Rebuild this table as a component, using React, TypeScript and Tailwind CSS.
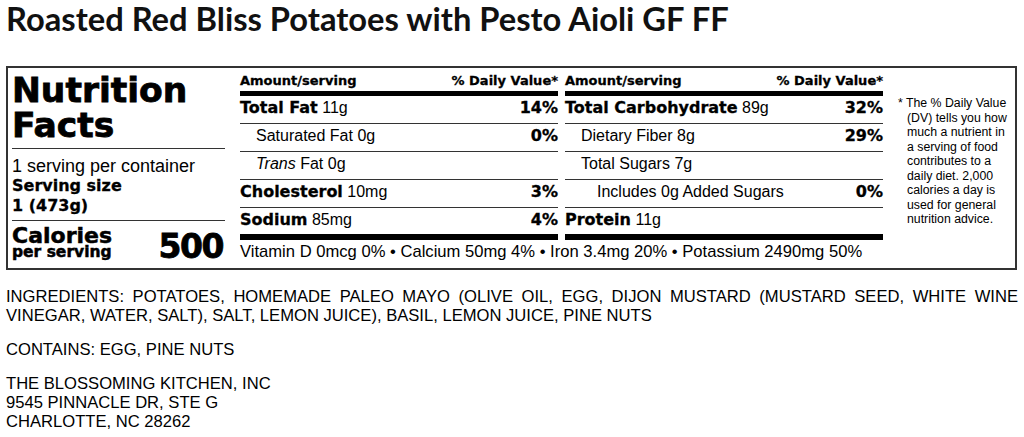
import React from "react";

const heavy = "font-['DejaVu_Sans',sans-serif] font-bold [-webkit-text-stroke:0.3px_black]";
const reg = "font-['Liberation_Sans',Arial,sans-serif]";

type RowProps = {
  children: React.ReactNode;
  dv?: string;
  indent?: 0 | 1 | 2;
  last?: boolean;
};

function Row({ children, dv, indent = 0, last = false }: RowProps) {
  const base = last
    ? "flex justify-between items-start h-[26px]"
    : "flex justify-between items-start h-[28px] border-b border-[#333]";
  const pad = indent === 2 ? "pl-[32px]" : indent === 1 ? "pl-[16px]" : "pl-0";
  return (
    <div className={base}>
      <div className={`${pad} text-[16px] leading-[24px] whitespace-nowrap`}>{children}</div>
      {dv ? <div className={`${heavy} text-[16px] leading-[24px]`}>{dv}</div> : null}
    </div>
  );
}

function B({ children }: { children: React.ReactNode }) {
  return <span className={heavy}>{children}</span>;
}

function Header() {
  return (
    <>
      <div className={`${heavy} flex justify-between text-[13px] leading-[16px]`}>
        <span>Amount/serving</span>
        <span>% Daily Value*</span>
      </div>
      <div className="mt-[2px] h-[5px] bg-black" />
    </>
  );
}

export default function App() {
  return (
    <div className={`${reg} w-[1024px] h-[437px] overflow-hidden bg-white text-black px-[6px]`}>
      <h1 className="font-['Lato',sans-serif] font-bold text-[32.7px] leading-[38px] text-[#111] whitespace-nowrap">
        Roasted Red Bliss Potatoes with Pesto Aioli GF FF
      </h1>

      <div className="mt-[28px] w-[1011px] h-[204px] border-2 border-[#333] flex pl-[4px]">
        {/* Left column */}
        <div className="w-[213px] flex flex-col pt-[5px]">
          <div className="font-['DejaVu_Sans',sans-serif] font-bold [-webkit-text-stroke:0.8px_black] text-[34.5px] leading-[35px]">
            Nutrition
            <br />
            Facts
          </div>
          <div className="mt-[5px] h-px bg-[#333]" />
          <div className="mt-[7px] leading-[20px]">
            <div className="text-[18px]">1 serving per container</div>
            <div className={`${heavy} text-[16px]`}>Serving size</div>
            <div className={`${heavy} text-[16px]`}>1 (473g)</div>
          </div>
          <div className="mt-[4px] h-px bg-[#333]" />
          <div className="flex justify-between items-start pt-[6px] pr-[2px]">
            <div className="font-['DejaVu_Sans',sans-serif] font-bold [-webkit-text-stroke:0.5px_black]">
              <div className="text-[22px] leading-[18px]">Calories</div>
              <div className="text-[15.5px] leading-[14px]">per serving</div>
            </div>
            <div className="font-['DejaVu_Sans',sans-serif] font-bold [-webkit-text-stroke:0.8px_black] mt-[5px] text-[33px] leading-[30px] tracking-[-1.5px]">
              500
            </div>
          </div>
        </div>

        {/* Middle section */}
        <div className="ml-[15px] w-[643px] flex flex-col pt-[5px]">
          <div className="flex gap-[7px]">
            <div className="w-[318px]">
              <Header />
              <Row dv="14%">
                <B>Total Fat</B> 11g
              </Row>
              <Row dv="0%" indent={1}>
                Saturated Fat 0g
              </Row>
              <Row indent={1}>
                <i>Trans</i> Fat 0g
              </Row>
              <Row dv="3%">
                <B>Cholesterol</B> 10mg
              </Row>
              <Row dv="4%" last>
                <B>Sodium</B> 85mg
              </Row>
              <div className="h-[6px] bg-black" />
            </div>
            <div className="w-[318px]">
              <Header />
              <Row dv="32%">
                <B>Total Carbohydrate</B> 89g
              </Row>
              <Row dv="29%" indent={1}>
                Dietary Fiber 8g
              </Row>
              <Row indent={1}>Total Sugars 7g</Row>
              <Row dv="0%" indent={2}>
                Includes 0g Added Sugars
              </Row>
              <Row last>
                <B>Protein</B> 11g
              </Row>
              <div className="h-[6px] bg-black" />
            </div>
          </div>
          <div className="mt-[2px] text-[16.6px] leading-[20px] whitespace-nowrap">
            Vitamin D 0mcg 0% • Calcium 50mg 4% • Iron 3.4mg 20% • Potassium 2490mg 50%
          </div>
        </div>

        {/* Footnote */}
        <div className="ml-[15px] pt-[28px] text-[12.3px] leading-[14.5px] whitespace-nowrap pl-[9px] indent-[-9px]">
          * The % Daily Value
          <br />
          (DV) tells you how
          <br />
          much a nutrient in
          <br />
          a serving of food
          <br />
          contributes to a
          <br />
          daily diet. 2,000
          <br />
          calories a day is
          <br />
          used for general
          <br />
          nutrition advice.
        </div>
      </div>

      <div className="mt-[17px] text-[16.6px] leading-[19px]">
        <div className="text-justify [text-align-last:justify]">
          INGREDIENTS: POTATOES, HOMEMADE PALEO MAYO (OLIVE OIL, EGG, DIJON MUSTARD (MUSTARD SEED, WHITE WINE
        </div>
        <div>VINEGAR, WATER, SALT), SALT, LEMON JUICE), BASIL, LEMON JUICE, PINE NUTS</div>
      </div>
      <div className="mt-[15px] text-[16.6px] leading-[19px]">CONTAINS: EGG, PINE NUTS</div>
      <div className="mt-[15px] text-[16.6px] leading-[19px]">
        <div>THE BLOSSOMING KITCHEN, INC</div>
        <div>9545 PINNACLE DR, STE G</div>
        <div>CHARLOTTE, NC 28262</div>
      </div>
    </div>
  );
}
